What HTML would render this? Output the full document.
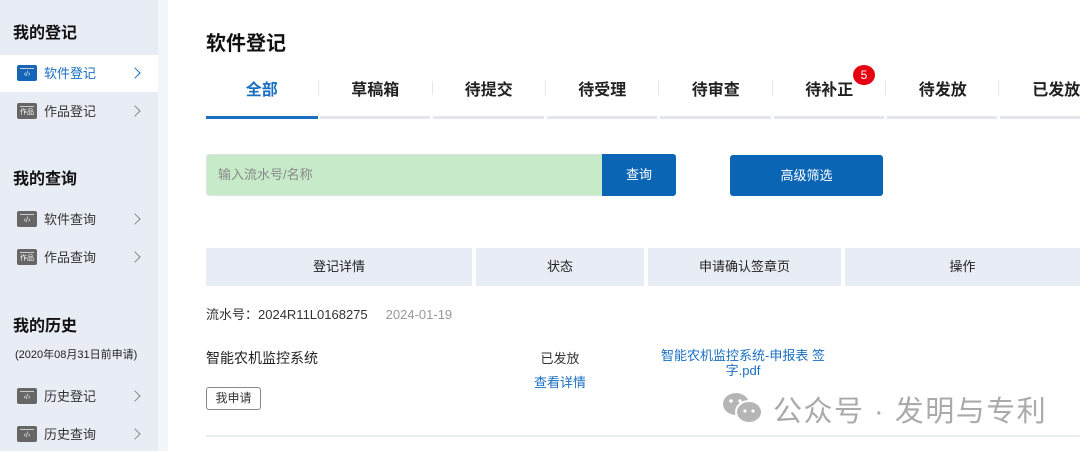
<!DOCTYPE html>
<html><head><meta charset="utf-8"><style>
*{margin:0;padding:0;box-sizing:border-box}
body{width:1080px;height:451px;overflow:hidden;background:#fff;font-family:"Liberation Sans","Noto Sans CJK SC",sans-serif;position:relative;color:#222}
.abs{position:absolute}
#side{left:0;top:0;width:158px;height:451px;background:#e8edf5}
#strip{left:158px;top:0;width:10px;height:451px;background:#f2f5f9}
.h{position:absolute;left:13px;font-size:16px;font-weight:bold;color:#111}
.item{position:absolute;left:0;width:158px;height:37px;font-size:13px;color:#333}
.item .ic{position:absolute;left:17px;top:10px;width:20px;height:16px;border-radius:2px;background:#666;color:#fff;font-size:7px;text-align:center;line-height:19px}
.item .ic:before{content:"";position:absolute;left:3px;top:3px;width:14px;height:1px;background:#ccc}
.item .t{position:absolute;left:44px;top:8px}
.item .ar{position:absolute;left:131px;top:14px;width:8px;height:8px;border-right:1.3px solid #888;border-top:1.3px solid #888;transform:rotate(45deg)}
.act{background:#fff;color:#1a6fc0}
.act .ic{background:#1565b8}
.act .ar{border-color:#1a6fc0}
.tab{position:absolute;top:76px;width:113.5px;text-align:center;font-size:16px;font-weight:bold;color:#222}
.sep{position:absolute;top:81px;width:1px;height:14px;background:#e3e7ec}
.ul{position:absolute;top:116px;height:3px;background:#e3e7ed}
.th{position:absolute;top:248px;height:38px;background:#e8edf5;font-size:13px;text-align:center;line-height:38px;color:#222}
</style></head><body>
<div id="side" class="abs"></div><div id="strip" class="abs"></div>
<div class="h" style="top:19px">我的登记</div>
<div class="item act" style="top:55px"><div class="ic">‹/›</div><div class="t">软件登记</div><div class="ar"></div></div>
<div class="item" style="top:93px"><div class="ic">作品</div><div class="t">作品登记</div><div class="ar"></div></div>
<div class="h" style="top:165px">我的查询</div>
<div class="item" style="top:201px"><div class="ic">‹/›</div><div class="t">软件查询</div><div class="ar"></div></div>
<div class="item" style="top:239px"><div class="ic">作品</div><div class="t">作品查询</div><div class="ar"></div></div>
<div class="h" style="top:312px">我的历史</div>
<div class="abs" style="left:15px;top:346px;font-size:11px;color:#222">(2020年08月31日前申请)</div>
<div class="item" style="top:378px"><div class="ic">‹/›</div><div class="t">历史登记</div><div class="ar"></div></div>
<div class="item" style="top:416px"><div class="ic">‹/›</div><div class="t">历史查询</div><div class="ar"></div></div>

<div class="abs" style="left:206px;top:27px;font-size:20px;font-weight:bold;color:#111">软件登记</div>
<div class="tab" style="left:205px;color:#1a6fc0">全部</div>
<div class="tab" style="left:318.5px">草稿箱</div>
<div class="tab" style="left:432px">待提交</div>
<div class="tab" style="left:545.5px">待受理</div>
<div class="tab" style="left:659px">待审查</div>
<div class="tab" style="left:772.5px">待补正</div>
<div class="tab" style="left:886px">待发放</div>
<div class="tab" style="left:999.5px">已发放</div>
<div class="sep" style="left:318px"></div><div class="sep" style="left:432px"></div><div class="sep" style="left:545px"></div><div class="sep" style="left:658px"></div><div class="sep" style="left:772px"></div><div class="sep" style="left:885px"></div><div class="sep" style="left:998px"></div>
<div class="abs" style="left:853px;top:65px;width:22px;height:20px;border-radius:50%;background:#e60012;color:#fff;font-size:12px;text-align:center;line-height:20px">5</div>
<div class="ul" style="left:206px;width:112px;background:#1a6fc0"></div>
<div class="ul" style="left:320px;width:110px"></div><div class="ul" style="left:433px;width:111px"></div><div class="ul" style="left:547px;width:110px"></div><div class="ul" style="left:660px;width:111px"></div><div class="ul" style="left:774px;width:110px"></div><div class="ul" style="left:887px;width:110px"></div><div class="ul" style="left:1000px;width:80px"></div>

<div class="abs" style="left:206px;top:154px;width:397px;height:42px;background:#c7ebc9;border:1px solid #dde3ea;border-right:none;border-radius:3px 0 0 3px;font-size:13px;color:#888;line-height:40px;padding-left:11px">输入流水号/名称</div>
<div class="abs" style="left:602px;top:154px;width:74px;height:42px;background:#0a65b4;border-radius:0 3px 3px 0;color:#fff;font-size:13px;text-align:center;line-height:42px">查询</div>
<div class="abs" style="left:730px;top:155px;width:153px;height:41px;background:#0a65b4;border-radius:3px;color:#fff;font-size:13px;text-align:center;line-height:41px">高级筛选</div>

<div class="th" style="left:206px;width:266px">登记详情</div>
<div class="th" style="left:476px;width:168px">状态</div>
<div class="th" style="left:648px;width:193px">申请确认签章页</div>
<div class="th" style="left:845px;width:235px">操作</div>

<div class="abs" style="left:206px;top:304px;font-size:13px;color:#333">流水号：2024R11L0168275<span style="color:#999;margin-left:18px">2024-01-19</span></div>
<div class="abs" style="left:206px;top:348px;font-size:14px;color:#222">智能农机监控系统</div>
<div class="abs" style="left:206px;top:387px;width:55px;height:23px;border:1px solid #888;border-radius:3px;font-size:12px;text-align:center;line-height:21px;color:#333">我申请</div>
<div class="abs" style="left:520px;top:348px;width:80px;text-align:center;font-size:13px;color:#333">已发放</div>
<div class="abs" style="left:520px;top:372px;width:80px;text-align:center;font-size:13px;color:#1a6fc0">查看详情</div>
<div class="abs" style="left:648px;top:348px;width:190px;text-align:center;font-size:13px;line-height:15px;color:#1a6fc0">智能农机监控系统-申报表 签<br>字.pdf</div>

<svg class="abs" style="left:721px;top:390px" width="44" height="36" viewBox="0 0 44 36">
<ellipse cx="15" cy="14" rx="13" ry="11" fill="#b5b5b5"/><ellipse cx="28" cy="22" rx="13" ry="11" fill="#b5b5b5" stroke="#fff" stroke-width="2"/>
<circle cx="10" cy="11" r="1.8" fill="#fff"/><circle cx="19" cy="11" r="1.8" fill="#fff"/><circle cx="24" cy="21" r="1.6" fill="#fff"/><circle cx="32" cy="21" r="1.6" fill="#fff"/></svg>
<div class="abs" style="left:773px;top:388px;font-size:29px;color:#aaa;letter-spacing:1.5px">公众号 · 发明与专利</div>
<div class="abs" style="left:206px;top:435px;width:874px;height:2px;background:#eceff2"></div>
</body></html>
